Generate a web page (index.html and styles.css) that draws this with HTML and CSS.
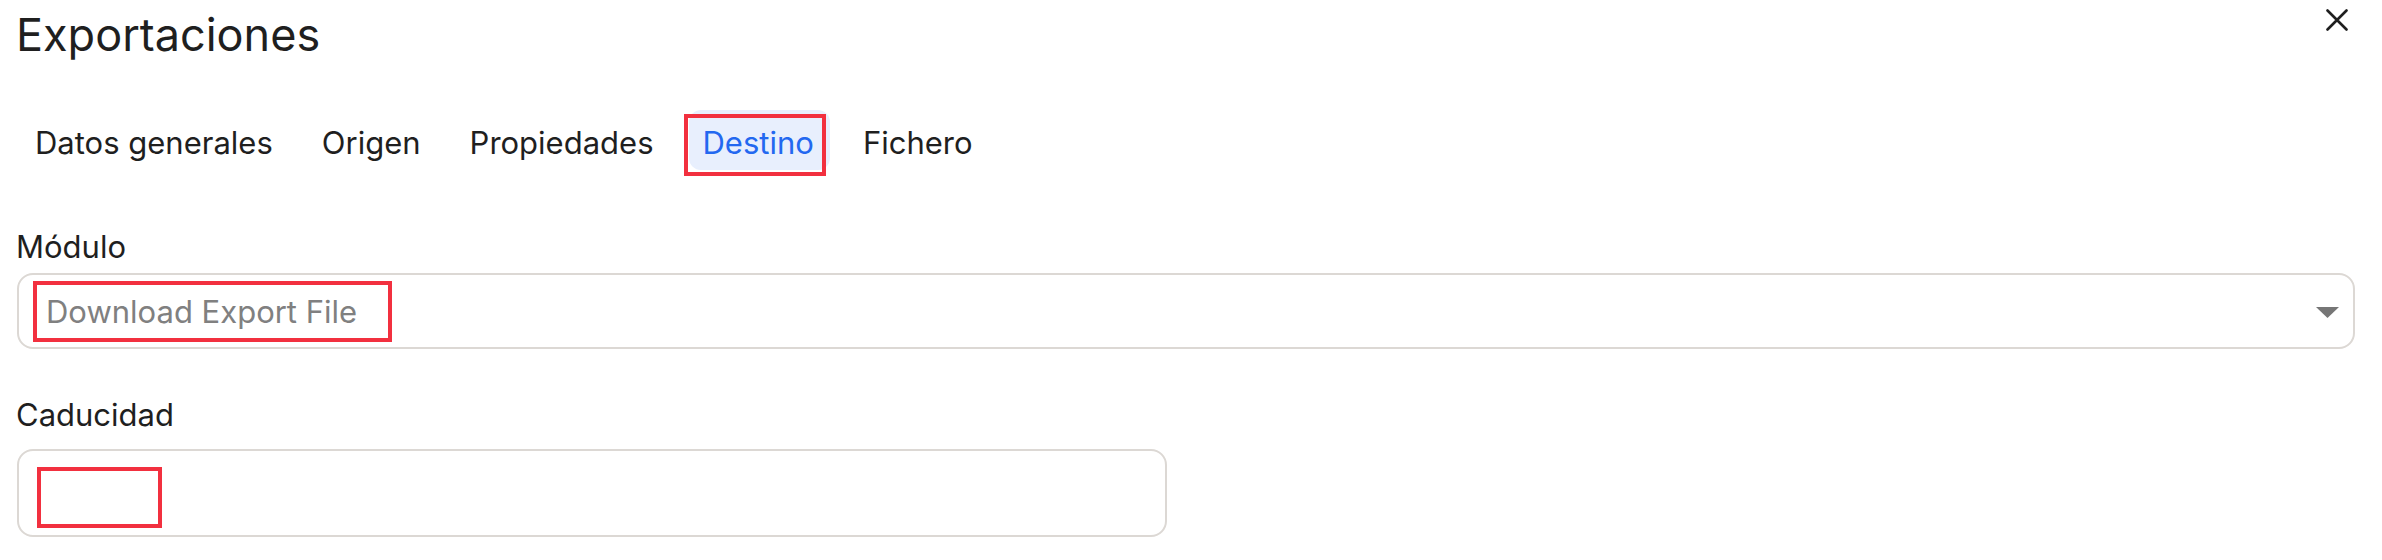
FILE: index.html
```html
<!DOCTYPE html>
<html lang="es">
<head>
<meta charset="utf-8">
<title>Exportaciones</title>
<link rel="stylesheet" href="styles.css">
</head>
<body>
<div class="dialog">
  <header class="head">
    <h1 class="title">Exportaciones</h1>
    <button class="close" type="button" aria-label="Cerrar">
      <svg width="22" height="22" viewBox="0 0 22 22" fill="none" stroke="#1f1f1f" stroke-width="2.6" stroke-linecap="round"><path d="M1.5 1.5 L20.5 20.5 M20.5 1.5 L1.5 20.5"/></svg>
    </button>
  </header>
  <nav class="tabs">
    <span class="tab">Datos generales</span>
    <span class="tab">Origen</span>
    <span class="tab">Propiedades</span>
    <span class="tab active">Destino<span class="mark mark-tab"></span></span>
    <span class="tab">Fichero</span>
  </nav>
  <div class="field">
    <label class="label">Módulo</label>
    <div class="select">
      <span class="placeholder">Download Export File</span>
      <svg class="caret" width="23" height="11" viewBox="0 0 23 11"><path d="M0 0 H23 L11.5 11 Z" fill="#767676"/></svg>
      <span class="mark mark-select"></span>
    </div>
  </div>
  <div class="field field-short">
    <label class="label">Caducidad</label>
    <div class="input"><span class="mark mark-input"></span></div>
  </div>
</div>
</body>
</html>
```
FILE: styles.css
```css
* { box-sizing: border-box; }
html, body { margin: 0; padding: 0; background: #ffffff; }
body {
  font-family: Inter, "Noto Sans", "Liberation Sans", sans-serif;
  color: #1f1f1f;
}
.dialog {
  padding: 9px 27px 0 17px;
}
.head {
  display: flex;
  justify-content: space-between;
  align-items: flex-start;
}
.title {
  margin: 3px 0 0 -1px;
  font-size: 45px;
  line-height: 45px;
  font-weight: 400;
  color: #1f1f1f;
}
.close {
  margin: 0 7px 0 0;
  padding: 0;
  border: 0;
  background: none;
  width: 22px;
  height: 22px;
  display: block;
}
.close svg { display: block; }
.tabs {
  display: flex;
  gap: 19px;
  margin-top: 53px;
  margin-left: 4px;
}
.tab {
  position: relative;
  padding: 6px 16px 0 14px;
  height: 60px;
  line-height: 54px;
  font-size: 31px;
  border-radius: 12px;
  color: #1f1f1f;
}
.tab.active {
  background: #e8effd;
  color: #2368f0;
}
.mark {
  position: absolute;
  border: 4px solid #f2303f;
}
.mark-tab { left: -5px; top: 4px; width: 142px; height: 62px; }
.field { margin-top: 59px; }
.field + .field { margin-top: 48px; }
.label {
  display: block;
  margin-left: -1px;
  font-size: 31px;
  line-height: 36px;
  color: #1f1f1f;
}
.select {
  position: relative;
  margin-top: 8px;
  height: 76px;
  border: 2px solid #dcd8d4;
  border-radius: 16px;
  display: flex;
  align-items: center;
  justify-content: space-between;
  padding: 0 14px 0 27px;
}
.placeholder {
  font-size: 31px;
  color: #808080;
}
.mark-select { left: 14px; top: 6px; width: 359px; height: 61px; }
.caret { display: block; margin-top: 2px; }
.input {
  position: relative;
  margin-top: 16px;
  width: 1150px;
  height: 88px;
  border: 2px solid #dcd8d4;
  border-radius: 16px;
}
.mark-input { left: 18px; top: 16px; width: 125px; height: 61px; }
```
